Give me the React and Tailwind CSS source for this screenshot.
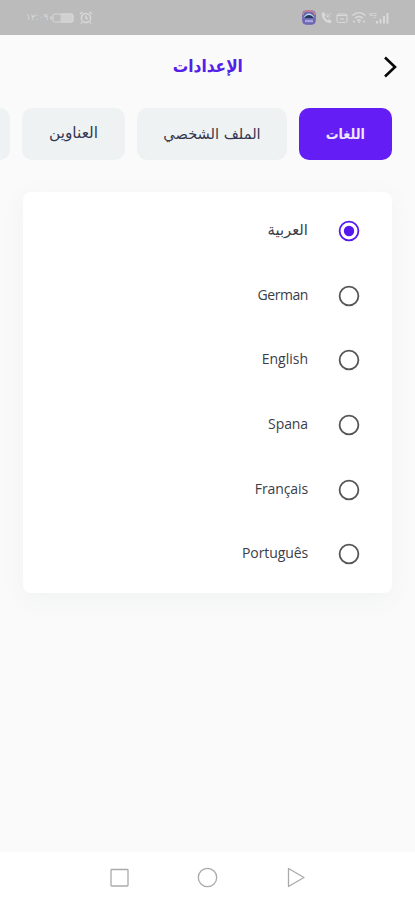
import React from "react";

const languages = [
  { name: "العربية", font: "font-['DejaVu_Sans',sans-serif] text-[14.8px]" },
  { name: "German", font: "font-['Open_Sans',sans-serif] text-[14px] tracking-[-0.45px]" },
  { name: "English", font: "font-['Open_Sans',sans-serif] text-[14px]" },
  { name: "Spana", font: "font-['Open_Sans',sans-serif] text-[14px] tracking-[-0.1px]" },
  { name: "Français", font: "font-['Open_Sans',sans-serif] text-[14px] tracking-[-0.1px]" },
  { name: "Português", font: "font-['Open_Sans',sans-serif] text-[14px] tracking-[-0.1px]" },
];

function StatusBar() {
  return (
    <div dir="ltr" className="flex h-[35px] shrink-0 items-center justify-between bg-[#bbbbbb] pl-[26px] pr-[25px] text-[#d9d9d9]">
      <div className="flex items-center">
        <span className="w-[24px] whitespace-nowrap font-['DejaVu_Sans',sans-serif] text-[9px] leading-none">١٢:٠٩</span>
        <svg width="24" height="10" viewBox="0 0 24 10" fill="none" stroke="currentColor">
          <rect x="3" y="1" width="20" height="8" rx="1.5" />
          <path d="M1 3.5v3" strokeWidth="1.5" />
          <rect x="11" y="1" width="12" height="8" rx="1" fill="currentColor" opacity="0.7" />
        </svg>
        <svg className="ml-[5px]" width="14" height="13" viewBox="0 0 14 13" fill="none" stroke="currentColor" strokeWidth="1.5">
          <circle cx="7" cy="7" r="4.6" />
          <path d="M7 4.5V7l1.8 1.2M1 3l2.5-2M13 3l-2.5-2M3 11.5l-1 1M11 11.5l1 1" />
        </svg>
      </div>
      <div className="flex items-center">
        <svg className="ml-[2px]" width="14" height="15" viewBox="0 0 14 15">
          <rect x="0.7" y="0.7" width="12.6" height="13.6" rx="3.5" fill="#6968b0" stroke="#7666b4" />
          <path d="M1 5a4 4 0 0 1 4-4h3a5 5 0 0 1 5 4" fill="none" stroke="#cf858c" strokeWidth="1.4" />
          <path d="M1.500 8C4 2 10 2 12.500 8Z" fill="#b9dce8" />
          <path d="M2 8C5 4 9 4 12 8Z" fill="#28365f" />
          <path d="M3 11h8" stroke="#a9a6dc" strokeWidth="2.500" />
        </svg>
        <svg className="ml-[4px]" width="13" height="14" viewBox="0 0 13 14" fill="none" stroke="currentColor">
          <path d="M2 2c-.5 5 3 9.500 8.500 10l1-2-2.500-1.500-1.500 1C5.500 8 4.500 6.500 4.300 5.300l1-1L4 1.500Z" fill="currentColor" strokeWidth="0.5" />
          <path d="M7 3v3h3M7 6l4-4" strokeWidth="0.8" />
        </svg>
        <svg className="ml-[3px]" width="12" height="12" viewBox="0 0 12 12" fill="none" stroke="currentColor">
          <rect x="1" y="2" width="10" height="8.500" rx="1.500" />
          <path d="M1 3.500h10M4 7h4" strokeWidth="1.200" />
        </svg>
        <svg className="ml-[3px]" width="16" height="13" viewBox="0 0 16 13" fill="none" stroke="currentColor" strokeWidth="1.500">
          <path d="M1.500 4.500c4-3.600 9-3.600 13 0M4 7.200c2.500-2.200 5.500-2.200 8 0M6.300 9.600c1-1 2.400-1 3.400 0" />
          <path d="M7 11h2M2 10l2 1.500M12 10.500h2" />
        </svg>
        <svg className="ml-[2px]" width="21" height="14" viewBox="0 0 21 14" fill="none" stroke="currentColor" strokeWidth="2">
          <path d="M8 12.500v-2.500M11.500 12.500V8M15 12.500V5M18.500 12.500V2" />
          <path d="M1 5V2l2 3V2M4.500 2.500h3M4.500 4.500h3M5 6.500h2" strokeWidth="0.8" />
        </svg>
      </div>
    </div>
  );
}

function Tab({ children, className = "bg-[#eff2f2] text-[#34374f]", width, labelClass = "" }) {
  return (
    <div className={`flex h-[52px] shrink-0 items-center justify-center rounded-[10px] font-['DejaVu_Sans',sans-serif] ${width} ${className}`}>
      <span className={`whitespace-nowrap leading-none ${labelClass}`}>{children}</span>
    </div>
  );
}

function Radio({ selected }) {
  return (
    <svg className="shrink-0" width="22" height="22" viewBox="0 0 22 22" fill="none">
      <circle cx="11" cy="11" r="9.400" stroke={selected ? "#5617ee" : "#555555"} strokeWidth="1.800" />
      {selected && <circle cx="11" cy="11" r="5.200" fill="#5617ee" />}
    </svg>
  );
}

export default function App() {
  return (
    <div dir="rtl" className="flex h-[900px] w-[415px] flex-col overflow-hidden bg-[#fafafa]">
      <StatusBar />
      <header className="grid h-[73px] shrink-0 grid-cols-[60px_1fr_60px] items-center pb-[9px]">
        <div className="pr-[17px]">
          <svg width="16" height="24" viewBox="0 0 16 24" fill="none" stroke="#080808" strokeWidth="2.600">
            <path d="M3 2.500 13 12 3 21.500" />
          </svg>
        </div>
        <h1 className="text-center font-['DejaVu_Sans',sans-serif] text-[17.500px] font-bold leading-none text-[#5420e6]">
          <span className="inline-block scale-x-[0.88]">الإعدادات</span>
        </h1>
      </header>
      <nav className="flex shrink-0 gap-[12px] overflow-hidden pr-[23px]">
        <Tab width="w-[93px]" className="bg-[#651df5] font-bold text-[#eee6ff]" labelClass="text-[14.500px] scale-x-[0.880] inline-block">اللغات</Tab>
        <Tab width="w-[150px]" labelClass="text-[14.600px]">الملف الشخصي</Tab>
        <Tab width="w-[103px]" labelClass="text-[15.400px]">العناوين</Tab>
        <Tab width="w-[90px]" />
      </nav>
      <main className="mx-[23px] mt-[32px] flex h-[401px] shrink-0 flex-col rounded-[8px] bg-white pt-[7px] shadow-[0_6px_24px_rgba(60,90,80,0.05)]">
        {languages.map((language, index) => (
          <div key={language.name} className="flex h-[64.6px] shrink-0 items-center gap-[30px] pr-[32px]">
            <Radio selected={index === 0} />
            <span className={`whitespace-nowrap pb-[2px] leading-none text-[#3b3d49] ${language.font}`}>
              {language.name}
            </span>
          </div>
        ))}
      </main>
      <div className="mt-auto flex h-[48px] shrink-0 items-center justify-center bg-white pt-[3px]">
        <svg className="mr-px" width="200" height="24" viewBox="0 0 200 24" fill="none" stroke="#aaaaaa" strokeWidth="1.300">
          <rect x="4" y="3.500" width="17" height="16.500" rx="0.800" />
          <circle cx="100.500" cy="11.500" r="9.200" />
          <path d="M181.500 2.500v18l15.500-9Z" strokeLinejoin="round" />
        </svg>
      </div>
    </div>
  );
}
